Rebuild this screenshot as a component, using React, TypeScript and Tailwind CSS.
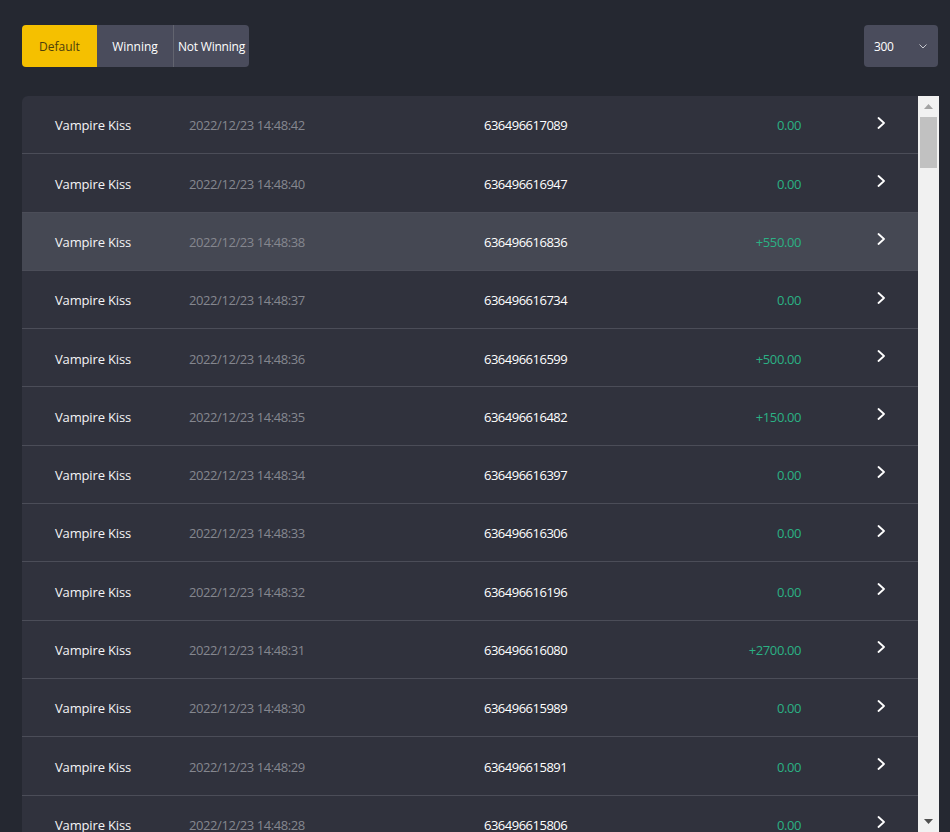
import React from "react";

interface Bet {
  time: string;
  id: string;
  amount: string;
  win: boolean;
}

const bets: Bet[] = [
  { time: "2022/12/23 14:48:42", id: "636496617089", amount: "0.00", win: false },
  { time: "2022/12/23 14:48:40", id: "636496616947", amount: "0.00", win: false },
  { time: "2022/12/23 14:48:38", id: "636496616836", amount: "+550.00", win: true },
  { time: "2022/12/23 14:48:37", id: "636496616734", amount: "0.00", win: false },
  { time: "2022/12/23 14:48:36", id: "636496616599", amount: "+500.00", win: true },
  { time: "2022/12/23 14:48:35", id: "636496616482", amount: "+150.00", win: true },
  { time: "2022/12/23 14:48:34", id: "636496616397", amount: "0.00", win: false },
  { time: "2022/12/23 14:48:33", id: "636496616306", amount: "0.00", win: false },
  { time: "2022/12/23 14:48:32", id: "636496616196", amount: "0.00", win: false },
  { time: "2022/12/23 14:48:31", id: "636496616080", amount: "+2700.00", win: true },
  { time: "2022/12/23 14:48:30", id: "636496615989", amount: "0.00", win: false },
  { time: "2022/12/23 14:48:29", id: "636496615891", amount: "0.00", win: false },
  { time: "2022/12/23 14:48:28", id: "636496615806", amount: "0.00", win: false },
];

function Chevron() {
  return (
    <svg width="9" height="12" viewBox="0 0 9 12" fill="none">
      <polyline points="1.5,1 7,6 1.5,11" stroke="#ffffff" strokeWidth="1.8" strokeLinecap="round" strokeLinejoin="round" />
    </svg>
  );
}

function Row({ bet, active }: { bet: Bet; active: boolean }) {
  return (
    <div
      className={`flex h-[58.3px] shrink-0 items-center border-b border-[#4b4d58] pt-[3px] text-[13px] ${
        active ? "bg-[#454853]" : ""
      }`}
    >
      <div className="w-[167px] pl-[33px] tracking-[-0.15px] text-[#f4f4f6]">Vampire Kiss</div>
      <div className="w-[295px] tracking-[-0.42px] text-[#85878f]">{bet.time}</div>
      <div className="w-[200px] tracking-[-0.5px] text-white">{bet.id}</div>
      <div className="w-[117px] text-right tracking-[-0.4px] text-[#2bb184]">{bet.amount}</div>
      <div className="ml-[76px] -mt-[7px] flex">
        <Chevron />
      </div>
    </div>
  );
}

export default function App() {
  return (
    <div
      className="h-[832px] w-[950px] overflow-hidden bg-[#252831]"
      style={{ fontFamily: '"Open Sans", "Noto Sans", sans-serif' }}
    >
      <div className="flex items-center justify-between pl-[22px] pr-[12px] pt-[25px]">
        <div className="flex h-[42px] overflow-hidden rounded-[4px] text-[12px]">
          <button className="w-[75px] bg-[#f5c000] pt-[2px] text-[#4d3f0c]">Default</button>
          <button className="w-[76px] bg-[#4a4c5c] pt-[2px] text-white">Winning</button>
          <button className="w-[76px] border-l border-[#62646f] bg-[#4a4c5c] pt-[2px] tracking-[-0.2px] text-white">
            Not Winning
          </button>
        </div>
        <div className="flex h-[42px] w-[74px] items-center justify-between rounded-[4px] bg-[#4a4c5c] pl-[10px] pr-[11px] text-[12px] text-white">
          <span className="pt-[2px] tracking-[-0.4px]">300</span>
          <svg width="8" height="5" viewBox="0 0 8 5" fill="none">
            <polyline points="0.5,0.5 4,4 7.5,0.5" stroke="#c8c9cf" strokeWidth="1" />
          </svg>
        </div>
      </div>

      <div className="ml-[22px] mt-[29px] flex w-[917px]">
        <div className="flex w-[896px] flex-col overflow-hidden rounded-tl-[6px] bg-[#30323d]">
          {bets.map((bet, i) => (
            <Row key={bet.id} bet={bet} active={i === 2} />
          ))}
        </div>
        <div className="flex h-[736px] w-[21px] flex-col items-center bg-[#f1f1f1]">
          <div className="flex h-[21px] items-center justify-center">
            <svg width="9" height="5" viewBox="0 0 9 5">
              <polygon points="0,5 4.5,0 9,5" fill="#a3a3a3" />
            </svg>
          </div>
          <div className="h-[51px] w-[17px] bg-[#c1c1c1]" />
          <div className="flex-1" />
          <div className="flex h-[21px] items-center justify-center">
            <svg width="9" height="5" viewBox="0 0 9 5">
              <polygon points="0,0 4.5,5 9,0" fill="#505050" />
            </svg>
          </div>
        </div>
      </div>
    </div>
  );
}
